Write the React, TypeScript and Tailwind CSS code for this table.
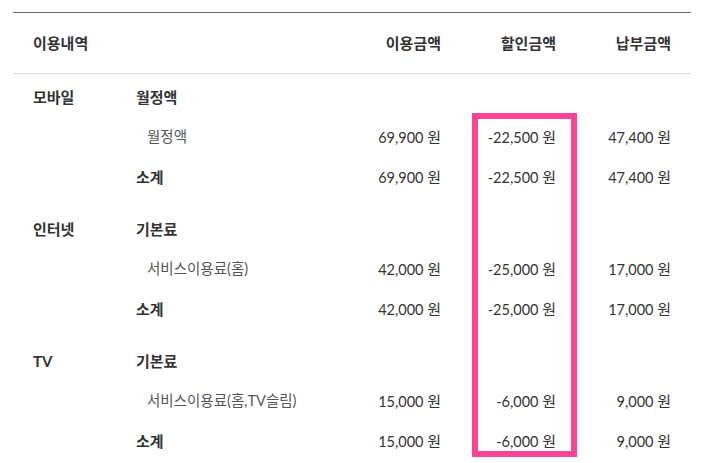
const groups = [
  {
    name: '모바일',
    label: '월정액',
    items: [{ name: '월정액', use: '69,900', discount: '-22,500', pay: '47,400' }],
    total: { use: '69,900', discount: '-22,500', pay: '47,400' },
  },
  {
    name: '인터넷',
    label: '기본료',
    items: [{ name: '서비스이용료(홈)', use: '42,000', discount: '-25,000', pay: '17,000' }],
    total: { use: '42,000', discount: '-25,000', pay: '17,000' },
  },
  {
    name: 'TV',
    label: '기본료',
    items: [{ name: '서비스이용료(홈,TV슬림)', use: '15,000', discount: '-6,000', pay: '9,000' }],
    total: { use: '15,000', discount: '-6,000', pay: '9,000' },
  },
]

const grid = 'grid grid-cols-[103px_1fr_115px_115px_115px] items-center px-[20px]'

function Won({ v }: { v: string }) {
  return (
    <span className="text-right text-[14.5px] text-[#333]">
      {v} <span className="text-[15px]">원</span>
    </span>
  )
}

export default function App() {
  return (
    <div
      className="w-[711px] h-[463px] bg-white pt-[12px] overflow-hidden"
      style={{ fontFamily: "Lato, 'Noto Sans CJK KR', sans-serif" }}
    >
      <div className="relative ml-[13px] w-[678px]">
        {/* header */}
        <div className={`${grid} h-[62px] border-t border-b border-t-[#666] border-b-[#ddd] text-[15px] font-bold text-[#333] leading-[20px]`}>
          <span className="col-span-2">이용내역</span>
          <span className="text-right">이용금액</span>
          <span className="text-right">할인금액</span>
          <span className="text-right">납부금액</span>
        </div>

        {groups.map((g, i) => (
          <div key={g.name} className={i === 0 ? 'pt-[3px]' : 'pt-[12px]'}>
            <div className={`${grid} h-[40px] leading-[20px]`}>
              <span className="text-[15px] font-bold text-[#333]">{g.name}</span>
              <span className="col-span-4 text-[15px] font-bold text-[#333]">{g.label}</span>
            </div>
            {g.items.map(it => (
              <div key={it.name} className={`${grid} h-[40px] leading-[20px]`}>
                <span />
                <span className="pl-[11px] text-[14.5px] text-[#555]">{it.name}</span>
                <Won v={it.use} />
                <Won v={it.discount} />
                <Won v={it.pay} />
              </div>
            ))}
            <div className={`${grid} h-[40px] leading-[20px]`}>
              <span />
              <span className="text-[15px] font-bold text-[#333]">소계</span>
              <Won v={g.total.use} />
              <Won v={g.total.discount} />
              <Won v={g.total.pay} />
            </div>
          </div>
        ))}

        {/* highlight over the discount column */}
        <div className="absolute left-[459px] top-[101px] w-[105px] h-[344px] border-[6px] border-[#fd4391]" />
      </div>
    </div>
  )
}
